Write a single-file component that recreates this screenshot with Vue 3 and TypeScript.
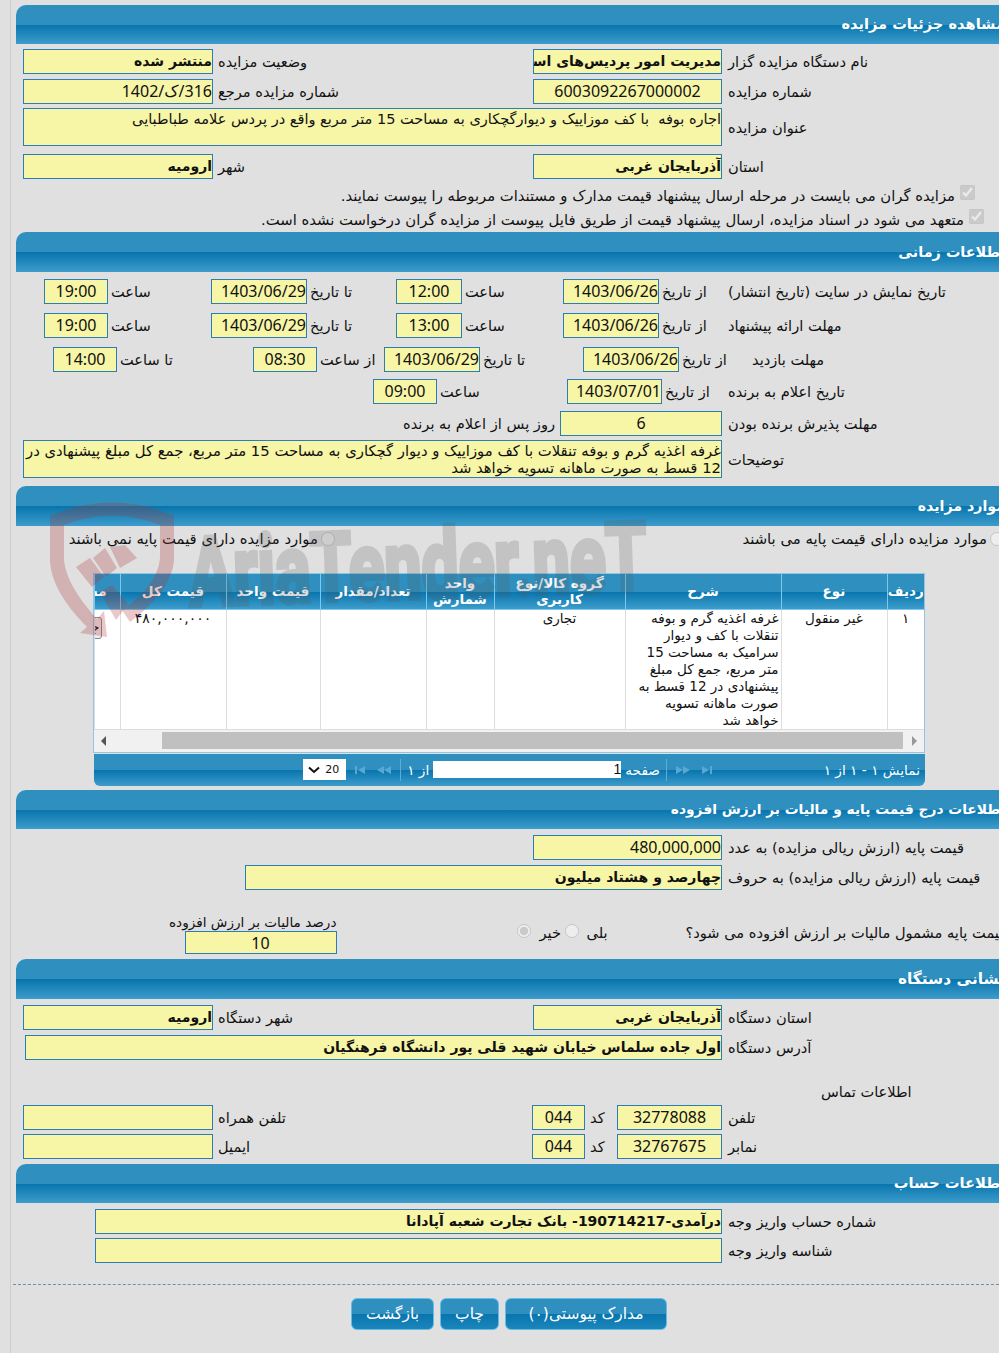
<script setup lang="ts">
interface Col { title: string; cls: string }
const cols: Col[] = [
  { title: 'ردیف', cls: 'c1' },
  { title: 'نوع', cls: 'c2' },
  { title: 'شرح', cls: 'c3' },
  { title: 'گروه کالا/نوع کاربری', cls: 'c4' },
  { title: 'واحد شمارش', cls: 'c5' },
  { title: 'تعداد/مقدار', cls: 'c6' },
  { title: 'قیمت واحد', cls: 'c7' },
  { title: 'قیمت کل', cls: 'c8' },
]
</script>

<template>
  <div class="page">
    <div class="rail"></div>

    <div class="head first"><span>مشاهده جزئیات مزایده</span></div>
    <div class="row r-two mt5">
      <div class="f strong">منتشر شده</div><div class="l">وضعیت مزایده</div>
      <div class="f strong">مدیریت امور پردیس‌های استان آذربایجان غربی</div><div class="l lr">نام دستگاه مزایده گزار</div>
    </div>
    <div class="row r-two mt5">
      <div class="f num">316/ک/1402</div><div class="l">شماره مزایده مرجع</div>
      <div class="f num center">6003092267000002</div><div class="l lr">شماره مزایده</div>
    </div>
    <div class="row r-wide tall38 mt4">
      <div class="f area">اجاره بوفه &nbsp;با کف موزاییک و دیوارگچکاری به مساحت 15 متر مربع واقع در پردس علامه طباطبایی</div><div class="l lr">عنوان مزایده</div>
    </div>
    <div class="row r-two mt8">
      <div class="f strong">ارومیه</div><div class="l">شهر</div>
      <div class="f strong">آذربایجان غربی</div><div class="l lr">استان</div>
    </div>
    <div class="check c-a"><input type="checkbox" checked disabled /><span>مزایده گران می بایست در مرحله ارسال پیشنهاد قیمت مدارک و مستندات مربوطه را پیوست نمایند.</span></div>
    <div class="check c-b"><input type="checkbox" checked disabled /><span>متعهد می شود در اسناد مزایده، ارسال پیشنهاد قیمت از طریق فایل پیوست از مزایده گران درخواست نشده است.</span></div>

    <div class="head h2"><span>اطلاعات زمانی</span></div>
    <div class="row t1 mt7">
      <div class="f num center">19:00</div><div class="l">ساعت</div>
      <div class="f num">1403/06/29</div><div class="l">تا تاریخ</div>
      <div class="f num center">12:00</div><div class="l">ساعت</div>
      <div class="f num">1403/06/26</div><div class="l">از تاریخ</div>
      <div class="l l0">تاریخ نمایش در سایت (تاریخ انتشار)</div>
    </div>
    <div class="row t1 mt9">
      <div class="f num center">19:00</div><div class="l">ساعت</div>
      <div class="f num">1403/06/29</div><div class="l">تا تاریخ</div>
      <div class="f num center">13:00</div><div class="l">ساعت</div>
      <div class="f num">1403/06/26</div><div class="l">از تاریخ</div>
      <div class="l l0">مهلت ارائه پیشنهاد</div>
    </div>
    <div class="row t3 mt9">
      <div class="f num center">14:00</div><div class="l">تا ساعت</div>
      <div class="f num center">08:30</div><div class="l">از ساعت</div>
      <div class="f num">1403/06/29</div><div class="l">تا تاریخ</div>
      <div class="f num">1403/06/26</div><div class="l">از تاریخ</div>
      <div class="l l0">مهلت بازدید</div>
    </div>
    <div class="row t4 mt7">
      <div class="f num center">09:00</div><div class="l">ساعت</div>
      <div class="f num">1403/07/01</div><div class="l">از تاریخ</div>
      <div class="l l0">تاریخ اعلام به برنده</div>
    </div>
    <div class="row t5 mt7">
      <div class="l l0">روز پس از اعلام به برنده</div>
      <div class="f num center">6</div>
      <div class="l lr">مهلت پذیرش برنده بودن</div>
    </div>
    <div class="row r-wide tall38 mt4">
      <div class="f area area2">غرفه اغذیه گرم و بوفه تنقلات با کف موزاییک و دیوار گچکاری به مساحت 15 متر مربع، جمع کل مبلغ پیشنهادی در 12 قسط به صورت ماهانه تسویه خواهد شد</div>
      <div class="l lr">توضیحات</div>
    </div>

    <div class="head h3"><span>موارد مزایده</span></div>
    <div class="radios">
      <label class="ra left"><input type="radio" disabled /><span>موارد مزایده دارای قیمت پایه نمی باشند</span></label>
      <label class="ra right"><input type="radio" disabled /><span>موارد مزایده دارای قیمت پایه می باشند</span></label>
    </div>

    <div class="grid-box">
      <table class="grid">
        <thead>
          <tr>
            <th v-for="c in cols" :key="c.cls" :class="c.cls">{{ c.title }}</th>
            <th class="c9"><div class="clip">مشاهده</div></th>
          </tr>
        </thead>
        <tbody>
          <tr>
            <td class="c1 ctr">۱</td>
            <td class="c2 ctr">غیر منقول</td>
            <td class="c3">غرفه اغذیه گرم و بوفه تنقلات با کف و دیوار سرامیک به مساحت 15 متر مربع، جمع کل مبلغ پیشنهادی در 12 قسط به صورت ماهانه تسویه خواهد شد</td>
            <td class="c4 ctr">تجاری</td>
            <td class="c5"></td>
            <td class="c6"></td>
            <td class="c7"></td>
            <td class="c8 ctr price">۴۸۰,۰۰۰,۰۰۰</td>
            <td class="c9"><div class="clip"><span class="mini">جزئیات</span></div></td>
          </tr>
        </tbody>
      </table>
      <div class="scroll">
        <svg class="sarrow" width="8" height="10" viewBox="0 0 8 10"><path d="M6 0v10L1 5z" fill="#555" /></svg>
        <div class="thumb"></div>
        <svg class="sarrow" width="8" height="10" viewBox="0 0 8 10"><path d="M2 0v10l5-5z" fill="#999" /></svg>
      </div>
    </div>
    <div class="pager">
      <div class="p-info">نمایش ۱ - ۱ از ۱</div>
      <div class="p-mid">
        <svg width="14" height="10" viewBox="0 0 14 10" class="ico"><path d="M13 1h-2v8h2zM10 5 3 1v8z" fill="#57a9d4" /></svg>
        <svg width="16" height="10" viewBox="0 0 16 10" class="ico"><path d="M1 1v8l7-4zM8 1v8l7-4z" fill="#57a9d4" /></svg>
        <div class="sep"></div>
        <span class="p-t">صفحه</span>
        <div class="p-input">1</div>
        <span class="p-t">از ۱</span>
        <div class="sep"></div>
        <svg width="16" height="10" viewBox="0 0 16 10" class="ico"><path d="M15 1v8L8 5zM8 1v8L1 5z" fill="#57a9d4" /></svg>
        <svg width="14" height="10" viewBox="0 0 14 10" class="ico"><path d="M1 1h2v8H1zM4 5l7-4v8z" fill="#57a9d4" /></svg>
        <div class="p-sel"><span>20</span>
          <svg width="12" height="8" viewBox="0 0 12 8"><path d="M1 1.500 6 6l5-4.500" fill="none" stroke="#111" stroke-width="2" /></svg>
        </div>
      </div>
    </div>

    <div class="head h4"><span>اطلاعات درج قیمت پایه و مالیات بر ارزش افزوده</span></div>
    <div class="row p1 mt6">
      <div class="f num">480,000,000</div>
      <div class="l lr">قیمت پایه (ارزش ریالی مزایده) به عدد</div>
    </div>
    <div class="row p2 mt5">
      <div class="f strong">چهارصد و هشتاد میلیون</div>
      <div class="l lr">قیمت پایه (ارزش ریالی مزایده) به حروف</div>
    </div>
    <div class="tax">
      <div class="tax-box">
        <div class="tax-l">درصد مالیات بر ارزش افزوده</div>
        <div class="f num center">10</div>
      </div>
      <div class="tax-r">
        <input type="radio" checked disabled class="rd" /><span class="tx1">خیر</span>
        <input type="radio" disabled class="rd r2" /><span class="tx2">بلی</span>
        <span class="tx3">قیمت پایه مشمول مالیات بر ارزش افزوده می شود؟</span>
      </div>
    </div>

    <div class="head h5"><span>نشانی دستگاه</span></div>
    <div class="row r-two mt6">
      <div class="f strong">ارومیه</div><div class="l">شهر دستگاه</div>
      <div class="f strong">آذربایجان غربی</div><div class="l lr">استان دستگاه</div>
    </div>
    <div class="row r-addr mt5">
      <div class="f strong">اول جاده سلماس خیابان شهید قلی پور دانشگاه فرهنگیان</div>
      <div class="l lr">آدرس دستگاه</div>
    </div>
    <div class="contact">اطلاعات تماس</div>
    <div class="row c-row mt4">
      <div class="f"></div><div class="l">تلفن همراه</div>
      <div class="f num center">044</div><div class="l">کد</div>
      <div class="f num center">32778088</div><div class="l lr">تلفن</div>
    </div>
    <div class="row c-row mt4">
      <div class="f"></div><div class="l">ایمیل</div>
      <div class="f num center">044</div><div class="l">کد</div>
      <div class="f num center">32767675</div><div class="l lr">نمابر</div>
    </div>

    <div class="head h6"><span>اطلاعات حساب</span></div>
    <div class="row r-acc mt6">
      <div class="f strong">درآمدی-190714217- بانک تجارت شعبه آپادانا</div>
      <div class="l lr">شماره حساب واریز وجه</div>
    </div>
    <div class="row r-acc mt4">
      <div class="f"></div>
      <div class="l lr">شناسه واریز وجه</div>
    </div>

    <div class="dash"></div>
    <div class="btns">
      <button class="btn b1" type="button">بازگشت</button>
      <button class="btn b2" type="button">چاپ</button>
      <button class="btn b3" type="button">مدارک پیوستی(۰)</button>
    </div>

    <svg class="mark" width="660" height="150" viewBox="40 495 660 150">
      <g fill="#a33" fill-opacity=".27">
        <path fill-rule="evenodd" d="M50 516Q112 489 174 516V560Q172 590 130 622L122 610Q158 585 160 558V525Q112 506 64 525V560Q66 585 97 619L104 611 107 637 80 633 87 627Q52 592 50 562z" />
        <path d="M76 567 90 558 104 577 92 587zM93 558 105 548 117 568 106 577zM110 547 125 545 137 558 120 568z" />
        <path d="M100 592 112 585 128 604 116 620z" />
      </g>
      <g opacity=".2">
        <text class="mark-t" x="190" y="606" transform="rotate(-2 190 606)" textLength="458" lengthAdjust="spacingAndGlyphs">AriaTender.neT</text>
      </g>
    </svg>
  </div>
</template>

<style>
html, body { margin: 0; background: #e0e0e0; }
</style>

<style scoped>
.page {
  position: relative;
  width: 999px;
  height: 1353px;
  overflow: hidden;
  background: #e0e0e0;
  font-family: "DejaVu Sans", sans-serif;
  font-size: 14.6px;
  color: #111;
  padding-top: 5px;
  box-sizing: border-box;
}
.rail { position: absolute; left: 10px; top: 0; bottom: 0; width: 1px; background: #ccc; }
.head {
  box-sizing: border-box;
  height: 39px;
  margin-left: 16px;
  margin-right: -6px;
  border-top-left-radius: 10px;
  background: linear-gradient(#2f90c0 0, #2f90c0 50%, #0875ae 51%, #3d9ccb 100%);
  direction: rtl;
  color: #fff;
  font-weight: bold;
  font-size: 14.6px;
  line-height: 38px;
  white-space: nowrap;
}
.h2 { margin-top: 1px; height: 40px; font-size: 14.4px; line-height: 40px; }
.h3 { margin-top: 8px; height: 40px; font-size: 14.2px; line-height: 40px; }
.h4 { margin-top: 4px; font-size: 13.8px; }
.h5 { margin-top: 4px; height: 40px; font-size: 15.4px; line-height: 40px; }
.h6 { margin-top: 5px; font-size: 14.7px; }

.row { display: grid; height: 25px; align-items: center; box-sizing: border-box; }
.mt4 { margin-top: 4px; } .mt5 { margin-top: 5px; } .mt6 { margin-top: 6px; }
.mt7 { margin-top: 7px; } .mt8 { margin-top: 8px; } .mt9 { margin-top: 9px; }
.tall38 { height: 38px; }

.r-two { padding-left: 23px; grid-template-columns: 190px 320px 189px 1fr; }
.r-wide { padding-left: 23px; grid-template-columns: 699px 1fr; }
.t1 { padding-left: 44px; grid-template-columns: 64px 103px 96px 89px 66px 101px 96px 69px 1fr; }
.t3 { padding-left: 53px; grid-template-columns: 64px 136px 64px 67px 96px 103px 96px 73px 1fr; }
.t4 { padding-left: 373px; grid-template-columns: 64px 130px 95px 66px 1fr; }
.t5 { padding-left: 403px; grid-template-columns: 157px 162px 1fr; }
.p1 { padding-left: 533px; grid-template-columns: 189px 1fr; }
.p2 { padding-left: 245px; grid-template-columns: 477px 1fr; }
.r-addr { padding-left: 25px; grid-template-columns: 697px 1fr; }
.c-row { padding-left: 23px; grid-template-columns: 190px 319px 53px 32px 105px 1fr; }
.r-acc { padding-left: 95px; grid-template-columns: 627px 1fr; }

.f {
  box-sizing: border-box;
  height: 100%;
  background: #f7f5a6;
  border: 1px solid #2b7db3;
  direction: rtl;
  text-align: right;
  white-space: nowrap;
  overflow: hidden;
  line-height: 23px;
}
.strong { font-size: 14px; font-weight: bold; }
.num { font-family: "Noto Sans", "DejaVu Sans", sans-serif; font-size: 16px; }
.center { text-align: center; }
.area { white-space: normal; line-height: 17px; padding-top: 2px; font-size: 14.5px; }
.area2 { font-size: 14.8px; padding-top: 1px; }
.l { direction: rtl; text-align: left; padding-left: 5px; white-space: nowrap; }
.lr { padding-left: 6px; }
.t1 .l, .t3 .l, .t4 .l { padding-left: 3px; }
.row .l0 { padding-left: 0; }

.check { display: flex; direction: rtl; align-items: center; height: 24px; gap: 5px; white-space: nowrap; font-size: 14.8px; }
.check input { margin: 0 0 6px; width: 15px; height: 15px; }
.c-a { padding-right: 24px; margin-top: 4px; }
.c-b { padding-right: 15px; }

.radios { position: relative; height: 47px; direction: rtl; font-size: 14.85px; }
.ra { position: absolute; top: 4px; display: flex; gap: 3px; align-items: center; white-space: nowrap; }
.ra input { margin: 0; width: 14px; height: 14px; }
.left { right: 664px; }
.right { right: -5px; }

.grid-box {
  box-sizing: border-box;
  margin-left: 93px;
  width: 832px;
  border: 1px solid #8fc6e6;
  overflow: hidden;
  direction: rtl;
}
.grid { width: 830px; table-layout: fixed; border-collapse: collapse; background: #fff; font-size: 13.5px; }
.c1 { width: 37px; } .c2 { width: 106px; } .c3 { width: 156px; } .c4 { width: 131px; }
.c5 { width: 68px; } .c6 { width: 106px; } .c7 { width: 94px; } .c8 { width: 106px; } .c9 { width: 26px; }
.grid th {
  box-sizing: border-box;
  height: 35px;
  padding: 0;
  color: #fff;
  font-size: 13.5px;
  line-height: 16px;
  font-weight: bold;
  background: linear-gradient(#2f90c0 0, #2f90c0 50%, #0875ae 51%, #3d9ccb 100%);
  border-left: 1px solid #7cc8ef;
  border-bottom: 1px solid #7cc8ef;
  overflow: hidden;
}
.grid td {
  box-sizing: border-box;
  height: 119px;
  vertical-align: top;
  padding: 0 1px;
  text-align: right;
  line-height: 17px;
  border-left: 1px solid #ddd;
  border-bottom: 1px solid #ddd;
  overflow: hidden;
}
.grid td.ctr { text-align: center; }
.grid td.price { font-size: 14px; }
.grid td.c3 { padding: 0 2px 0 4px; }
.clip { width: 80px; margin-right: 13px; white-space: nowrap; text-align: right; }
.grid td .clip { margin-top: 7px; margin-right: 17px; }
.mini { display: inline-block; padding: 0 1px; height: 20px; border: 1px solid #888; border-radius: 3px; background: #eee; line-height: 18px; font-size: 14px; }
.scroll { height: 22px; background: #f1f1f1; display: flex; align-items: center; gap: 5px; padding: 0 6px; direction: ltr; }
.thumb { flex: 1; height: 17px; background: #c0c0c0; margin-left: 49px; margin-right: 2px; }
.sarrow { flex: none; }

.pager {
  box-sizing: border-box;
  margin: 1px 0 0 94px;
  width: 831px;
  height: 32px;
  border-radius: 0 0 6px 6px;
  background: linear-gradient(#2f90c0 0, #2f90c0 50%, #0875ae 51%, #3d9ccb 100%);
  color: #fff;
  direction: rtl;
  display: flex;
  align-items: center;
  font-size: 13.7px;
  padding-right: 5px;
}
.p-info { width: 205px; white-space: nowrap; }
.p-mid { display: flex; align-items: center; flex: 1; gap: 4px; }
.ico { margin: 0 2px; }
.sep { width: 1px; height: 22px; background: #63aad2; margin: 0 2px; }
.p-t { white-space: nowrap; }
.p-input { box-sizing: border-box; width: 188px; height: 17px; background: #fff; color: #111; font-family: "Liberation Sans", sans-serif; font-size: 14px; line-height: 17px; }
.p-sel { box-sizing: border-box; width: 43px; height: 21px; background: #fff; color: #111; display: flex; align-items: center; justify-content: space-between; padding: 0 7px 0 5px; margin-right: 2px; font-size: 11px; }

.tax { display: flex; height: 40px; margin-top: 25px; padding-left: 169px; }
.tax-box { width: 168px; display: flex; flex-direction: column; direction: rtl; }
.tax-box .f { width: 152px; height: 23px; flex: none; }
.tax-l { height: 16px; line-height: 14px; text-align: left; white-space: nowrap; font-size: 13.6px; }
.tax-r { display: flex; align-items: center; height: 40px; margin-left: 180px; padding-bottom: 4px; white-space: nowrap; box-sizing: border-box; }
.rd { margin: 0 0 4px; width: 14px; height: 14px; }
.r2 { margin-left: 5px; }
.tx1 { margin-left: 9px; width: 20px; }
.tx2 { margin-left: 8px; width: 99px; }
.tx3 { direction: rtl; }

.contact { direction: rtl; margin-top: 22px; height: 19px; text-align: left; padding-left: 821px; line-height: 19px; }

.dash { margin: 21px 0 0 13px; border-top: 1px dashed #6b92ad; }
.btns { display: flex; margin-top: 13px; padding-left: 351px; gap: 6px; }
.btn {
  box-sizing: border-box;
  height: 32px;
  padding: 0;
  border: 1px solid #62bde9;
  border-radius: 6px;
  background: linear-gradient(#2f90c0 0, #2f90c0 50%, #0875ae 51%, #1c86bb 100%);
  color: #fff;
  font-family: "DejaVu Sans", sans-serif;
  font-size: 15.5px;
  direction: rtl;
}
.b1 { width: 83px; }
.b2 { width: 59px; }
.b3 { width: 162px; }

.mark { position: absolute; left: 40px; top: 495px; pointer-events: none; }
.mark-t { font-family: Roboto, "Liberation Sans", sans-serif; font-weight: 700; font-size: 96px; fill: #555; stroke: #555; stroke-width: 5px; }
</style>
